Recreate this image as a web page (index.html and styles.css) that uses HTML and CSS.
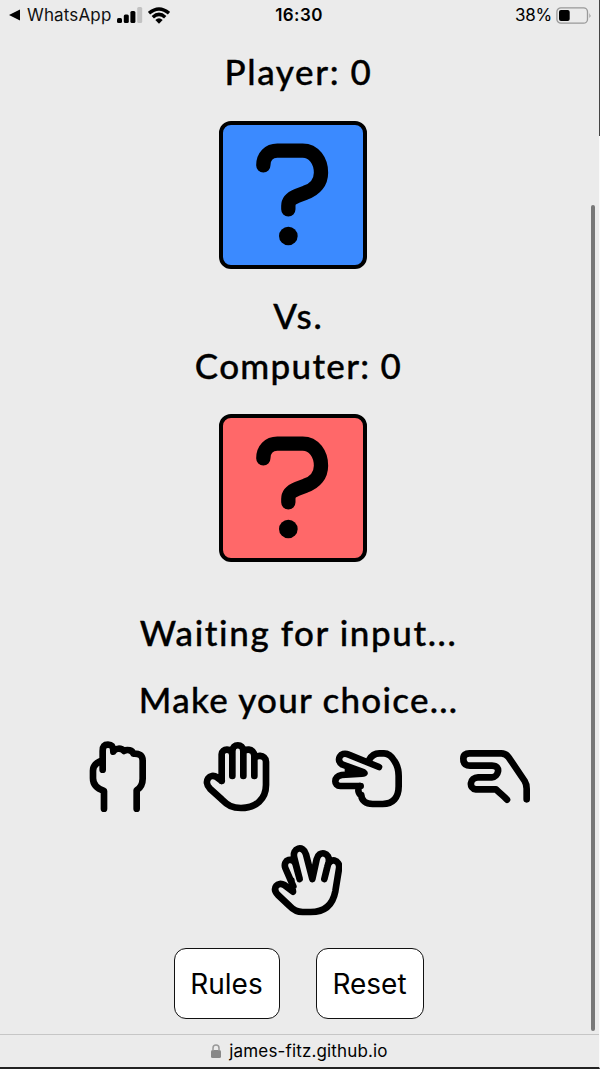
FILE: index.html
```html
<!DOCTYPE html>
<html lang="en">
<head>
<meta charset="utf-8">
<title>Rock Paper Scissors Lizard Spock</title>
<link rel="stylesheet" href="styles.css">
</head>
<body>
<div class="screen">
  <header class="status">
    <div class="status-left">
      <svg class="back" viewBox="0 0 12 12"><path d="M0 6 11 .5v11z"/></svg>
      <span class="carrier">WhatsApp</span>
      <svg class="signal" viewBox="0 0 26 16"><rect x="0" y="11" width="5" height="5" rx="1.5"/><rect x="6.8" y="7.5" width="5" height="8.5" rx="1.5"/><rect x="13.4" y="4" width="5" height="12" rx="1.5"/><rect class="faint" x="20.2" y="0" width="5" height="16" rx="1.5"/></svg>
      <svg class="wifi" viewBox="0 0 22 17"><path d="M1 6.2Q11-2.3 21 6.200M4.800 10.200Q11 4.500 17.200 10.200"/><path class="tip" d="M7.300 13Q11 9.700 14.700 13L11 16.800z"/></svg>
    </div>
    <div class="clock">16:30</div>
    <div class="status-right">
      <span class="percent">38%</span>
      <svg class="battery" viewBox="0 0 36 17"><rect class="shell" x=".9" y=".8" width="30.600" height="15.400" rx="4"/><rect x="3" y="3" width="10.700" height="11" rx="2"/><path class="nub" d="M33.500 6v5q1.800-2.500 0-5"/></svg>
    </div>
  </header>
  <main class="game">
    <h2 class="label player">Player: 0</h2>
    <div class="tile blue">
      <svg viewBox="0 0 510 510"><path d="M160 166C160 140 177 122 202 122H278C312 122 333 153 333 188C333 216 316 238 286 248L262 257C244 264 235 272 235 288V298"/><circle cx="235" cy="378" r="28"/></svg>
    </div>
    <h2 class="label versus">Vs.</h2>
    <h2 class="label computer">Computer: 0</h2>
    <div class="tile red">
      <svg viewBox="0 0 510 510"><path d="M160 166C160 140 177 122 202 122H278C312 122 333 153 333 188C333 216 316 238 286 248L262 257C244 264 235 272 235 288V298"/><circle cx="235" cy="378" r="28"/></svg>
    </div>
    <h2 class="label result">Waiting for input...</h2>
    <h2 class="label prompt">Make your choice...</h2>
    <div class="choices">
      <svg class="hand" viewBox="-39 0 258 255"><path d="M68 104V48C68 33 75 29 84 29C94 29 100 33 100 50C105 39 124 38 132 48C142 42 157 46 160 56C178 55 188 61 188 77V131C188 147 182 158 170 166V221M66 76C48 83 39 91 39 107V130C39 147 51 161 72 168V221"/></svg>
      <svg class="hand" viewBox="-6 0 258 255"><path d="M80 138V58C80 39 112 39 112 60V123V48C112 25 145 25 145 48V123V56C145 39 178 39 178 62V123V76C178 57 213 58 213 80V150C213 192 183 219 138 219C112 219 98 211 80 193L45 161C23 139 45 112 66 127L80 138"/></svg>
      <svg class="hand" viewBox="-3 0 258 255"><path d="M177 96 86 59C61 48 47 76 66 88L128 111C136 114 135 116 126 116L65 120C40 125 41 153 61 153H122M148 74C155 61 163 55 178 55H192C208 55 216 65 224 79C232 91 236 102 236 123V154C236 188 218 207 188 207H158C137 207 124 196 124 180C116 178 111 164 120 153"/><path class="gap" d="M78 102 126 113 78 108Z"/></svg>
      <svg class="hand" viewBox="-15 0 258 255"><path d="M171 194C161 182 151 176 138 163H78C54 160 60 127 84 127H126C144 127 156 92 126 92H60C45 92 40 83 40 71C40 60 47 55 58 55H154C165 55 171 60 176 67L224 138C229 146 230 151 230 161V193"/></svg>
      <svg class="hand" viewBox="-18 0 258 255"><path d="M94 154 70 99C61 73 95 65 101 88L113 132 97 69C89 38 124 29 132 58L151 132 164 73C170 44 206 52 200 81L187 132 196 95C202 65 236 74 231 101L220 169C212 211 188 231 146 231H122C106 231 94 225 83 213L48 180C28 158 48 139 67 150L93 170 88 136"/></svg>
    </div>
    <div class="actions">
      <button class="rules">Rules</button>
      <button class="reset">Reset</button>
    </div>
  </main>
  <footer class="address">
    <svg class="lock" viewBox="0 0 10 15"><rect x="0" y="6" width="10" height="8" rx="1.500"/><path d="M2 7V4Q2 1 5 1t3 3v3"/></svg>
    <span>james-fitz.github.io</span>
  </footer>
  <i class="scrollbar"></i>
  <i class="edge"></i>
</div>
</body>
</html>
```
FILE: styles.css
```css
* { box-sizing: border-box; }
body { margin: 0; background: #ebebeb; color: #000; font-family: Inter, "Liberation Sans", sans-serif; }
.screen { position: relative; height: 1069px; display: flex; flex-direction: column; border-right: 1px solid #fafafa; border-bottom: 2px solid #222; }
.status { height: 30px; padding: 0 7px 0 9px; display: grid; grid-template-columns: 1fr auto 1fr; align-items: center; font-size: 17px; line-height: 30px; }
.status-left, .status-right { display: flex; align-items: center; }
.status-left { color: #111; }
.status-right { justify-content: flex-end; gap: 4px; }
.back { width: 12px; height: 12px; margin-right: 6px; }
.carrier { letter-spacing: .15px; margin-right: 6px; }
.signal { width: 26px; height: 16px; margin-right: 5px; }
.faint { fill: #c2c2c2; }
.wifi { width: 22px; height: 17px; fill: none; stroke: #000; stroke-width: 3.4; }
.wifi .tip { fill: #000; stroke: none; }
.clock { font-weight: 600; margin-right: 3px; letter-spacing: .4px; }
.percent { letter-spacing: -.2px; }
.battery { width: 36px; height: 17px; }
.battery .shell { fill: none; stroke: #999; stroke-width: 1.3; }
.nub { fill: #888; }
.game { flex: 1; display: flex; flex-direction: column; align-items: center; padding-right: 2px; }
.label { margin: 0; height: 50px; font: 500 35px/50px Lato, "Open Sans", sans-serif; white-space: nowrap; -webkit-text-stroke: .35px #000; }
.player { margin-top: 16px; letter-spacing: 1.6px; }
.versus { margin-top: 23px; letter-spacing: 1.8px; }
.computer { height: 49px; letter-spacing: 1.3px; }
.result { margin-top: 45px; letter-spacing: 1.6px; }
.prompt { margin-top: 17px; letter-spacing: 1.25px; }
.tile { width: 148px; height: 148px; margin: 25px 12px 0 0; border: 4px solid #000; border-radius: 12px; display: flex; align-items: center; justify-content: center; }
.blue + .versus { margin-top: 21px; }
.tile svg { width: 170px; height: 170px; flex: none; margin-left: 5px; }
.tile path { fill: none; stroke: #000; stroke-width: 43; stroke-linecap: round; stroke-linejoin: round; }
.blue { background: #3b8aff; }
.red { background: #ff6869; }
.choices { width: 466px; margin-top: 11px; display: flex; flex-wrap: wrap; justify-content: center; gap: 15px 40px; }
.hand { width: 86px; height: 85px; fill: none; stroke: #000; stroke-width: 20; stroke-linecap: round; stroke-linejoin: round; }
.hand .gap { fill: #000; stroke-width: 8; }
.actions { margin-top: 28px; display: flex; gap: 36px; }
.actions button { height: 71px; padding: 0; border: 1.5px solid #111; border-radius: 12px; background: #fff; color: #000; font: 400 28px/68px Inter, "Liberation Sans", sans-serif; }
.rules { width: 106px; }
.reset { width: 108px; }
.address { height: 33px; border-top: 1px solid #c6c6c6; display: flex; align-items: center; justify-content: center; gap: 8px; font-size: 17px; letter-spacing: .15px; }
.lock { width: 10px; height: 15px; fill: #888; }
.lock path { fill: none; stroke: #999; stroke-width: 1.5; }
.scrollbar { position: absolute; right: 4px; top: 205px; width: 4px; height: 826px; border-radius: 2px; background: #787878; }
.edge { position: absolute; right: -1px; top: 0; width: 1px; height: 136px; background: #444; }
```
